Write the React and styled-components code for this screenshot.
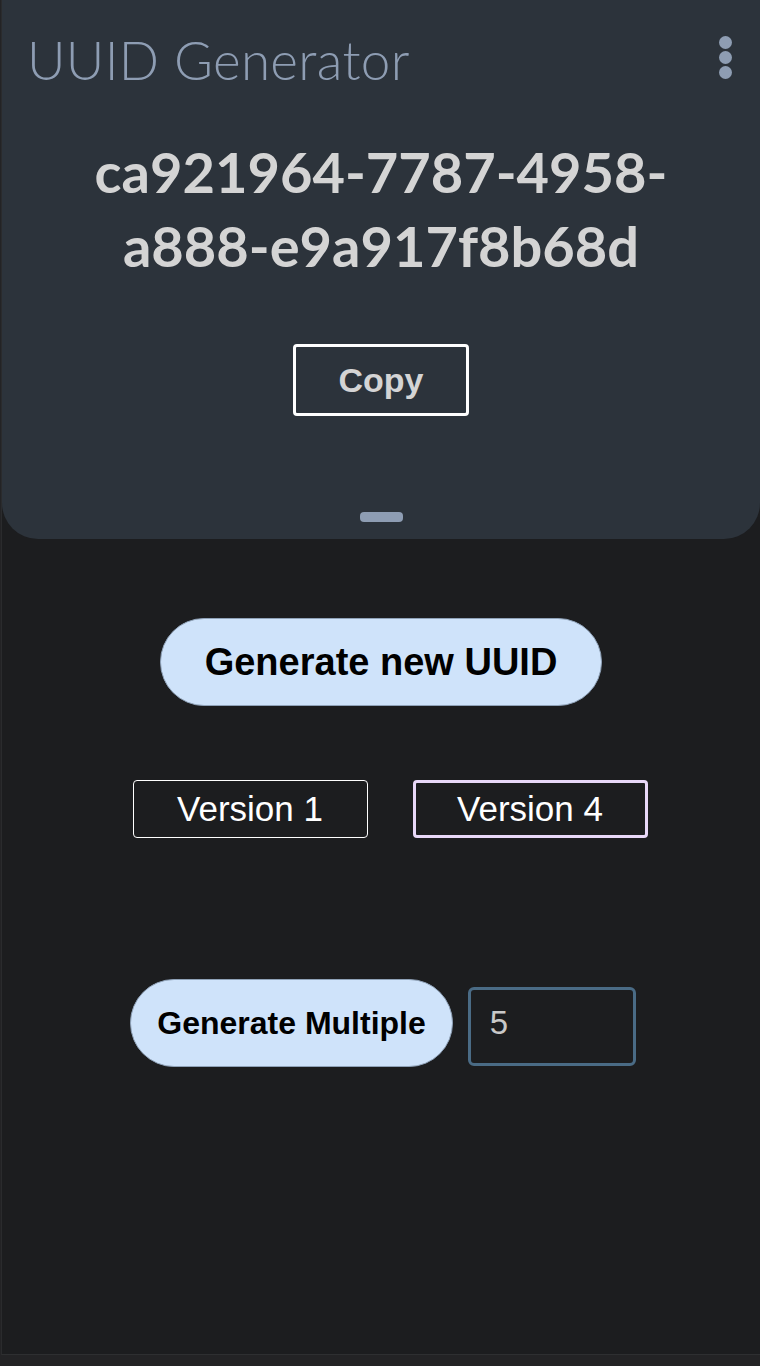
import React, { useState } from "react";
import styled, { createGlobalStyle } from "styled-components";

const GlobalStyle = createGlobalStyle`
  html, body {
    margin: 0;
    padding: 0;
    background: #232325;
  }
  * {
    box-sizing: border-box;
  }
`;

const Frame = styled.div`
  height: 1355px;
  margin-left: 1px;
  background: #1c1d1f;
  border-left: 1px solid #2a2b2d;
  border-bottom: 1px solid #2e2f31;
  display: flex;
  flex-direction: column;
`;

const Header = styled.header`
  height: 539px;
  background: #2c333b;
  border-radius: 0 0 36px 36px;
  display: flex;
  flex-direction: column;
  align-items: center;
  padding: 25px 0 0;
`;

const TitleBar = styled.div`
  width: 100%;
  display: flex;
  align-items: center;
  justify-content: space-between;
  padding: 0 28px 0 25px;
`;

const Title = styled.h1`
  margin: 0;
  font-family: Lato, "Open Sans", sans-serif;
  font-weight: 300;
  font-size: 53px;
  line-height: 70px;
  color: #8e9db3;
  letter-spacing: 0.3px;
`;

const MenuButton = styled.button`
  background: transparent;
  border: 0;
  padding: 0;
  color: #8e9db3;
  display: flex;
  flex-direction: column;
  gap: 2px;
  margin-top: -6px;
`;

const Dot = styled.span`
  width: 13px;
  height: 13px;
  border-radius: 50%;
  background: currentColor;
`;

const Uuid = styled.div`
  margin-top: 40px;
  width: 620px;
  text-align: center;
  font-family: Lato, "Open Sans", sans-serif;
  font-weight: 700;
  font-size: 56px;
  line-height: 74px;
  color: #d4d4d4;
`;

const CopyButton = styled.button`
  margin-top: 61px;
  width: 176px;
  height: 72px;
  background: transparent;
  border: 3px solid #ffffff;
  border-radius: 4px;
  font-family: "Liberation Sans", Arial, sans-serif;
  font-weight: 700;
  font-size: 34px;
  color: #d4d4d4;
`;

const Handle = styled.div`
  margin-top: auto;
  margin-bottom: 17px;
  width: 43px;
  height: 10px;
  border-radius: 4px;
  background: #8e9db3;
`;

const Body = styled.main`
  display: flex;
  flex-direction: column;
  align-items: center;
`;

const PillButton = styled.button`
  height: 88px;
  padding: 0 ${p => p.$pad}px;
  background: #cfe3fa;
  border: 1px solid #8fa2b8;
  border-radius: 44px;
  font-family: "Liberation Sans", Arial, sans-serif;
  font-weight: 700;
  font-size: ${p => p.$size}px;
  color: #000;
  white-space: nowrap;
`;

const VersionRow = styled.div`
  margin-top: 74px;
  display: flex;
  gap: 45px;
  margin-left: 18px;
`;

const VersionButton = styled.button`
  width: 235px;
  height: 58px;
  background: transparent;
  border: ${p => (p.$active ? "3px solid #e8d8f8" : "1.5px solid #ffffff")};
  border-radius: 4px;
  font-family: "Liberation Sans", Arial, sans-serif;
  font-size: 35px;
  color: #ffffff;
`;

const MultipleRow = styled.div`
  margin-top: 141px;
  display: flex;
  align-items: flex-end;
  gap: 15px;
  margin-left: 4px;
`;

const CountInput = styled.input`
  width: 168px;
  height: 79px;
  background: transparent;
  border: 3px solid #4a6b85;
  border-radius: 6px;
  padding: 0 0 8px 19px;
  margin-bottom: 1px;
  font-family: "Liberation Sans", Arial, sans-serif;
  font-size: 33px;
  color: #c8c8c8;
  outline: none;
`;

export default function App() {
  const [version, setVersion] = useState(4);
  const [count, setCount] = useState("5");

  return (
    <>
      <GlobalStyle />
      <Frame>
        <Header>
          <TitleBar>
            <Title>UUID Generator</Title>
            <MenuButton aria-label="menu">
              <Dot />
              <Dot />
              <Dot />
            </MenuButton>
          </TitleBar>
          <Uuid>ca921964-7787-4958-a888-e9a917f8b68d</Uuid>
          <CopyButton>Copy</CopyButton>
          <Handle />
        </Header>
        <Body>
          <PillButton $pad={44} $size={38} style={{ marginTop: 79 }}>
            Generate new UUID
          </PillButton>
          <VersionRow>
            <VersionButton $active={version === 1} onClick={() => setVersion(1)}>
              Version 1
            </VersionButton>
            <VersionButton $active={version === 4} onClick={() => setVersion(4)}>
              Version 4
            </VersionButton>
          </VersionRow>
          <MultipleRow>
            <PillButton $pad={26} $size={32}>Generate Multiple</PillButton>
            <CountInput value={count} onChange={e => setCount(e.target.value)} />
          </MultipleRow>
        </Body>
      </Frame>
    </>
  );
}
